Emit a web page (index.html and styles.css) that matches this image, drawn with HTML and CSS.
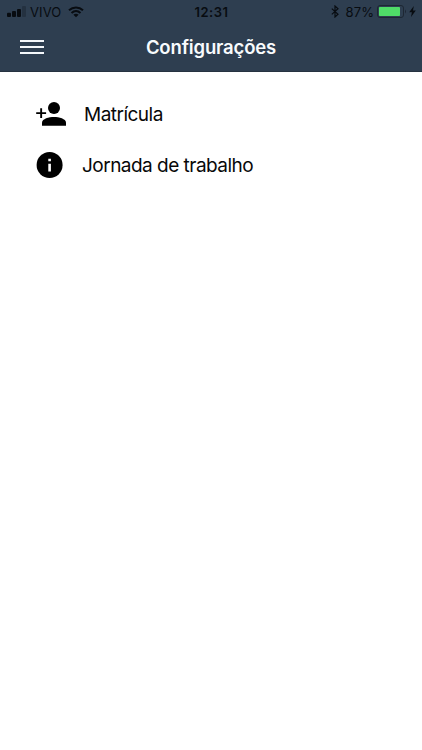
FILE: index.html
```
<!DOCTYPE html>
<html lang="pt-BR">
<head>
    <meta charset="UTF-8">
    <meta name="viewport" content="width=device-width, initial-scale=1.0">
    <title>Configurações</title>
    <link rel="stylesheet" href="styles.css">
</head>
<body>
    <header class="header">
        <div class="status-bar">
            <div class="status-left">
                <svg width="19" height="11" viewBox="0 0 19 11">
                    <rect x="0" y="6.7" width="4" height="4.3" rx="1"/>
                    <rect x="5" y="5" width="4" height="6" rx="1"/>
                    <rect x="10" y="3" width="4" height="8" rx="1"/>
                    <rect x="15" y="0" width="4" height="11" rx="1" opacity="0.25"/>
                </svg>
                <span class="carrier">VIVO</span>
                <svg width="16" height="12" viewBox="0 0 16 12">
                    <path d="M1 4.3C5 .5 11 .5 15 4.3M3.5 7C6.2 4.6 9.8 4.6 12.5 7" fill="none" stroke="#080c11" stroke-width="2"/>
                    <path d="M8 11.3L5.4 8.8Q8 6.8 10.6 8.8Z"/>
                </svg>
            </div>
            <span class="clock">12:31</span>
            <div class="status-right">
                <svg width="8" height="13" viewBox="0 0 8 13">
                    <path d="M.8 3.6L7 9.2 4 12V1l3 2.8L.8 9.4" fill="none" stroke="#080c11" stroke-width="1.2"/>
                </svg>
                <span class="percent">87%</span>
                <svg width="30" height="13" viewBox="0 0 30 13">
                    <rect x=".5" y=".5" width="26" height="12" rx="2.5" fill="none" stroke="#1d2733"/>
                    <rect x="2" y="2" width="21" height="9" rx=".8" fill="#4fdc68"/>
                    <path d="M28 4.5q2 2 0 4z" fill="#1d2733"/>
                </svg>
                <svg class="bolt" width="7" height="11" viewBox="0 0 7 11">
                    <path d="M4.8 0L.2 6.2h2.7L2 11l4.8-6.4H4z"/>
                </svg>
            </div>
        </div>
        <div class="navbar">
            <button class="menu-button" aria-label="Menu">
                <span></span>
                <span></span>
                <span></span>
            </button>
            <h1>Configurações</h1>
        </div>
    </header>
    <main class="options">
        <a class="option">
            <svg width="30" height="24" viewBox="0 0 30 24">
                <circle cx="18" cy="6.1" r="6"/>
                <path d="M6 23.8v-3.2c0-3.8 7-5.6 12-5.6s12 1.8 12 5.6v3.2z"/>
                <path d="M4.2 6.2h1.9v4h4v1.9h-4v4H4.2v-4h-4v-1.9h4z"/>
            </svg>
            <span class="label">Matrícula</span>
        </a>
        <a class="option">
            <svg width="28" height="26" viewBox="0 0 28 26">
                <circle cx="13.6" cy="13" r="13"/>
                <path d="M12.3 6.7h2.6v2.5h-2.6zM12.3 11.7h2.6v7.7h-2.6z" fill="#fff"/>
            </svg>
            <span class="label">Jornada de trabalho</span>
        </a>
    </main>
</body>
</html>
```

FILE: styles.css
```
body {
    margin: 0;
    min-height: 100vh;
    background-color: #fff;
    color: #080808;
    font-family: Inter, "Liberation Sans", sans-serif;
}
svg {
    display: block;
    flex: none;
}
.header {
    box-sizing: border-box;
    height: 72px;
    background-color: #2e3e50;
    border-bottom: 1px solid #263341;
}
.status-bar {
    display: grid;
    grid-template-columns: 1fr auto 1fr;
    align-items: center;
    height: 24px;
    padding: 0 6px 0 7px;
    color: #080c11;
    fill: #080c11;
    font-size: 13px;
    line-height: 24px;
}
.status-left,
.status-right {
    display: flex;
    align-items: center;
}
.status-right {
    justify-content: flex-end;
}
.status-bar svg {
    margin-bottom: 1px;
}
.carrier {
    margin: 0 7px 0 4px;
    letter-spacing: 0.1px;
}
.clock {
    font-weight: 600;
    letter-spacing: 0.5px;
}
.percent {
    margin: 0 3px 0 7px;
    letter-spacing: 0.1px;
}
.bolt {
    margin-left: 2px;
}
.navbar {
    display: grid;
    grid-template-columns: 64px 1fr 64px;
    align-items: center;
    height: 45px;
}
.menu-button {
    display: flex;
    flex-direction: column;
    gap: 4px;
    width: 24px;
    margin-left: 20px;
    padding: 0;
    border: none;
    background-color: transparent;
    cursor: pointer;
}
.menu-button span {
    height: 2px;
    background-color: #f4f7fa;
}
.navbar h1 {
    margin: 0;
    color: #f8fbfd;
    font-size: 18.5px;
    font-weight: 600;
    letter-spacing: -0.15px;
    line-height: 24px;
    text-align: center;
}
.options {
    display: flex;
    flex-direction: column;
    gap: 1px;
    padding: 17px 36px 0;
}
.option {
    display: flex;
    align-items: center;
    height: 50px;
}
.label {
    margin-left: 18px;
    font-size: 19px;
    letter-spacing: -0.52px;
}
```
